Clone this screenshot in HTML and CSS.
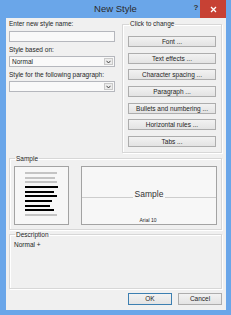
FILE: index.html
```html
<!DOCTYPE html>
<html>
<head>
<meta charset="utf-8">
<link rel="stylesheet" href="styles.css">
</head>
<body>
<div class="window">
  <div class="titlebar">
    <div class="tb-spacer"></div>
    <div class="title">New Style</div>
    <div class="help">?</div>
    <div class="close">
      <svg width="7" height="7" viewBox="0 0 7 7"><path d="M1 1 L6 6 M6 1 L1 6" stroke="#fff" stroke-width="1.3"/></svg>
    </div>
    <div class="tb-edge"></div>
  </div>
  <div class="content">
    <div class="top">
      <div class="left">
        <div class="lbl">Enter new style name:</div>
        <div class="input"></div>
        <div class="lbl lbl-gap">Style based on:</div>
        <div class="select"><span class="sel-text">Normal</span><span class="arrow"><svg width="5" height="4" viewBox="0 0 5 4"><path d="M0.5 0.8 L2.5 3 L4.5 0.8" fill="none" stroke="#333" stroke-width="0.9"/></svg></span></div>
        <div class="lbl lbl-gap">Style for the following paragraph:</div>
        <div class="select"><span class="sel-text"></span><span class="arrow"><svg width="5" height="4" viewBox="0 0 5 4"><path d="M0.5 0.8 L2.5 3 L4.5 0.8" fill="none" stroke="#333" stroke-width="0.9"/></svg></span></div>
      </div>
      <fieldset class="group">
        <legend>Click to change</legend>
        <div class="btn-list">
          <div class="btn">Font ...</div>
          <div class="btn">Text effects ...</div>
          <div class="btn">Character spacing ...</div>
          <div class="btn">Paragraph ...</div>
          <div class="btn">Bullets and numbering ...</div>
          <div class="btn">Horizontal rules ...</div>
          <div class="btn">Tabs ...</div>
        </div>
      </fieldset>
    </div>
    <fieldset class="sample">
      <legend>Sample</legend>
      <div class="previews">
        <div class="para">
          <div class="ln grey" style="width:32px"></div>
          <div class="ln grey" style="width:30px"></div>
          <div class="ln grey" style="width:32px"></div>
          <div class="ln black" style="width:33px"></div>
          <div class="ln black" style="width:29px"></div>
          <div class="ln black" style="width:32px"></div>
          <div class="ln black" style="width:27px"></div>
          <div class="ln black" style="width:25px"></div>
          <div class="ln black" style="width:29px"></div>
          <div class="ln grey" style="width:32px"></div>
        </div>
        <div class="fontbox">
          <div class="sample-row">
            <div class="rule"></div>
            <span class="sample-text">Sample</span>
            <div class="rule"></div>
          </div>
          <div class="fontname">Arial 10</div>
        </div>
      </div>
    </fieldset>
    <fieldset class="desc">
      <legend>Description</legend>
      <div class="desc-text">Normal +</div>
    </fieldset>
    <div class="actions">
      <div class="dbtn default">OK</div>
      <div class="dbtn">Cancel</div>
    </div>
  </div>
</div>
</body>
</html>
```

FILE: styles.css
```css
* { box-sizing: border-box; }
html, body { margin: 0; padding: 0; }
body {
  width: 231px;
  height: 315px;
  overflow: hidden;
  font-family: "Liberation Sans", Arial, sans-serif;
  font-size: 6.5px;
  color: #1e1e1e;
  background: #6aa6e9;
}
.window {
  width: 231px;
  height: 315px;
  background: #6aa6e9;
  display: flex;
  flex-direction: column;
}
.titlebar {
  height: 18px;
  display: flex;
  align-items: flex-start;
  flex: none;
}
.tb-spacer { width: 42px; flex: none; }
.title {
  flex: 1;
  text-align: center;
  font-size: 9.5px;
  line-height: 18px;
  color: #2a2a2a;
}
.help {
  width: 11px;
  flex: none;
  text-align: center;
  padding-left: 3px;
  font-size: 8px;
  font-weight: bold;
  line-height: 15px;
  color: #333;
}
.close {
  width: 26px;
  height: 18px;
  flex: none;
  background: #c74134;
  display: flex;
  align-items: center;
  justify-content: center;
}
.tb-edge { width: 5px; flex: none; }
.content {
  flex: 1;
  margin: 0 5px 5px 6px;
  background: #f0f0f0;
  padding: 2px 4px 5px 3px;
  display: flex;
  flex-direction: column;
}
.top {
  display: flex;
  gap: 7px;
}
.left {
  width: 106px;
  display: flex;
  flex-direction: column;
}
.lbl {
  line-height: 8px;
  height: 8px;
  white-space: nowrap;
}
.lbl-gap { margin-top: 4px; }
.input {
  margin-top: 3px;
  height: 11px;
  border: 1px solid #b5b7bd;
  background: #f9f9f9;
}
.select {
  margin-top: 2px;
  height: 11px;
  border: 1px solid #b5b7bd;
  background: #f9f9f9;
  display: flex;
  align-items: stretch;
}
.sel-text {
  flex: 1;
  padding-left: 2px;
  line-height: 9px;
}
.arrow {
  width: 9px;
  margin: 1px;
  border: 1px solid #c9c9c9;
  background: #ececec;
  display: flex;
  align-items: center;
  justify-content: center;
}
fieldset {
  margin: 0;
  border: 1px solid #d7d7d7;
  box-shadow: inset 1px 1px 0 #fff, 1px 1px 0 #fff;
}
legend {
  padding: 0 1px;
  margin-left: 1px;
  line-height: 8px;
  height: 8px;
}
.group {
  width: 100px;
  padding: 8px 5px 5px;
}
.btn-list {
  display: flex;
  flex-direction: column;
  gap: 5.66px;
}
.btn {
  height: 11px;
  border: 1px solid #adadad;
  background: linear-gradient(#f2f2f2, #e3e3e3);
  text-align: center;
  line-height: 9px;
  white-space: nowrap;
}
.sample {
  margin-top: 2px;
  padding: 3px 4px 4px 4px;
}
.previews {
  display: flex;
  gap: 12px;
  height: 59px;
}
.para {
  width: 55px;
  border: 1px solid #a3a3a3;
  background: #f7f7f7;
  padding: 5px 0 0 10px;
  display: flex;
  flex-direction: column;
  gap: 2.67px;
}
.ln { height: 2px; flex: none; }
.ln.grey { background: #c4c4c4; }
.ln.black { background: #000; }
.fontbox {
  flex: 1;
  border: 1px solid #a3a3a3;
  background: #f7f7f7;
  display: flex;
  flex-direction: column;
  justify-content: space-between;
  padding-top: 23px;
}
.sample-row {
  display: flex;
  align-items: flex-end;
  height: 9px;
}
.rule {
  flex: 1;
  height: 1px;
  background: #cdcdcd;
  margin-bottom: 1px;
}
.sample-text {
  font-size: 8.5px;
  line-height: 9px;
  padding: 0 2px 0 2px;
  color: #333;
}
.fontname {
  text-align: center;
  font-size: 5px;
  line-height: 6px;
  padding-bottom: 1px;
  padding-right: 2px;
}
.desc {
  margin-top: 1px;
  flex: 1;
  padding: 2px 4px;
}
.desc-text {
  line-height: 8px;
}
.actions {
  margin-top: 4px;
  display: flex;
  justify-content: flex-end;
  gap: 6px;
  padding-right: 0;
}
.dbtn {
  width: 44px;
  height: 12px;
  border: 1px solid #adadad;
  background: linear-gradient(#f2f2f2, #e3e3e3);
  text-align: center;
  line-height: 10px;
}
.dbtn.default { border-color: #3c7fb1; }
```
